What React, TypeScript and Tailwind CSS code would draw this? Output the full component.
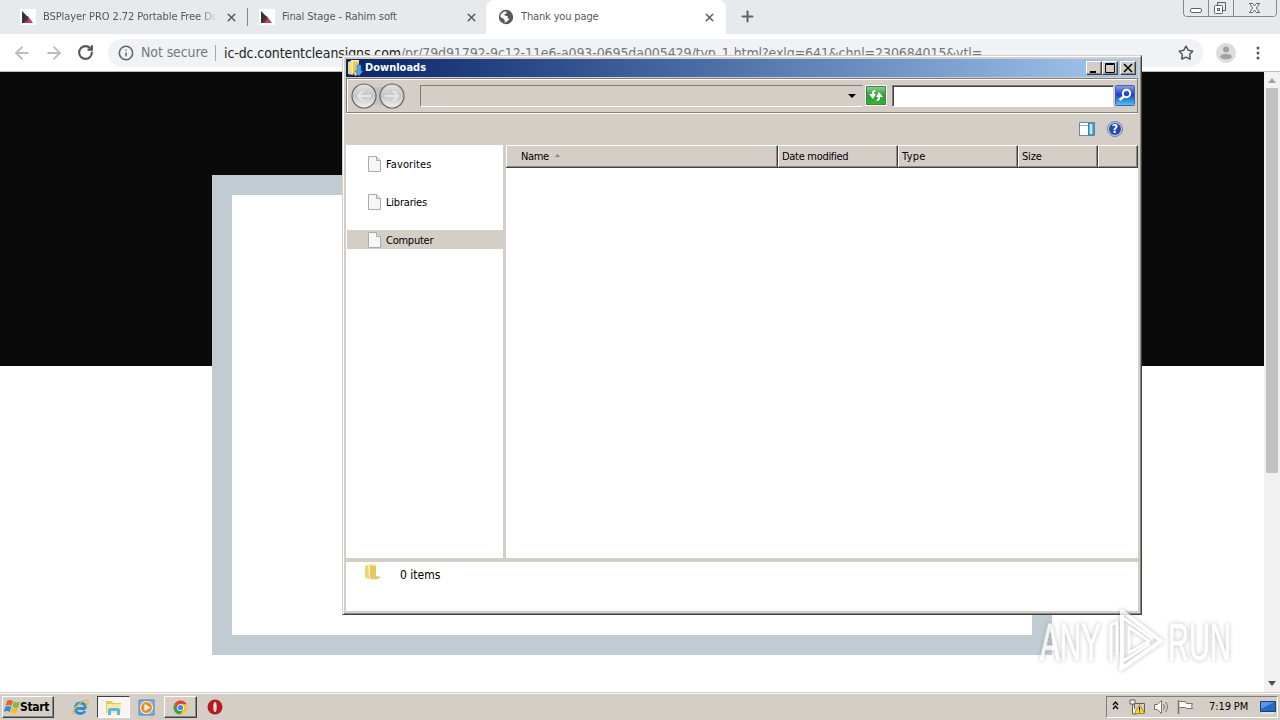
import type { ReactNode } from 'react';
import { ArrowLeft, ArrowRight, Info, Plus, RotateCw, Star, X } from 'lucide-react';

interface TabProps {
  title: string;
  className: string;
  textClass: string;
  icon: ReactNode;
  active?: boolean;
}

const sidebarItems = [
  { label: 'Favorites', text: 'tracking-[0.1px]' },
  { label: 'Libraries', text: 'tracking-[-0.2px]' },
  { label: 'Computer', text: 'tracking-[-0.25px]', selected: true },
];

const columns = [
  { label: 'Name', width: 'w-[272px] pl-[14px]', text: 'tracking-[-0.4px]', sorted: true },
  { label: 'Date modified', width: 'w-[120px] pl-[3px]', text: 'tracking-[-0.3px]' },
  { label: 'Type', width: 'w-[120px] pl-[3px]', text: 'tracking-[0.3px]' },
  { label: 'Size', width: 'w-[80px] pl-[3px]', text: 'tracking-[-0.2px]' },
  { label: '', width: 'w-[40px]', text: '' },
];

const raised = 'border border-t-white border-l-white border-r-[#404040] border-b-[#404040] shadow-[inset_-1px_-1px_0_#8c8882] bg-[#d5cec6]';

function SiteIcon() {
  return (
    <svg width="16" height="16" viewBox="0 0 16 16">
      <rect width="16" height="16" fill="#fff" />
      <path d="M2 2l6 6v6H2z" fill="#34343c" />
      <path d="M8 7l5 7H4z" fill="#b4485c" />
      <path d="M8 7v4l-4 3H3z" fill="#5d2c3a" />
    </svg>
  );
}

function GlobeIcon() {
  return (
    <svg width="16" height="16" viewBox="0 0 16 16">
      <circle cx="8" cy="8" r="7.2" fill="#55585c" />
      <path d="M8.500 2.500c-.8 1 .6 1.500-.4 2.300-1 .3-1.900.7-1.600 1.700 1 .6 2.600-.2 3.300 1 .3 1-.6 1.300-.3 2.300l2-.2c-.8 1.800-2.500 3.600-5.100 4.100.4-1.300.8-2.300-.2-3.300C5 9.300 2.500 9 2.300 7.600 2.700 4.600 5 2.500 8.500 2.500z" fill="#fff" />
    </svg>
  );
}

function Tab({ title, className, textClass, icon, active }: TabProps) {
  return (
    <div className={`relative flex h-[34px] shrink-0 items-center ${className} ${active ? 'rounded-t-lg bg-white' : ''}`}>
      {icon}
      <div className={`ml-[7px] flex-1 overflow-hidden whitespace-nowrap pt-px text-[11px] text-[#55585c] ${textClass}`}>{title}</div>
      <X size={13} strokeWidth={3} className="shrink-0 text-[#5f6368]" />
    </div>
  );
}

function BrowserButtons() {
  return (
    <svg width="94" height="17" viewBox="0 0 94 17" className="absolute left-[1183px] top-0" fill="none" stroke="#85898d">
      <path d="M.5 0v13q0 3.500 3 3.500h87q3 0 3-3.500V0M25.500 0v16M50.500 0v16" />
      <rect x="7.500" y="8.500" width="11" height="4" rx="1.500" stroke="#5d6164" fill="#fff" />
      <path d="M34.500 5.500v-3h8v8h-3" stroke="#5d6164" />
      <rect x="31.500" y="5.500" width="8" height="8" rx="1" stroke="#5d6164" fill="#fff" />
      <rect x="34.500" y="8.500" width="2" height="2" stroke="#5d6164" />
      <path d="M66.500 3.500h3l2 2.500 2-2.500h3l-3.200 4.500 3.200 4.500h-3l-2-2.500-2 2.500h-3l3.200-4.500z" stroke="#5d6164" fill="#fff" />
    </svg>
  );
}

function Browser() {
  return (
    <div className="flex h-[692px] flex-col">
      <div className="relative flex h-[34px] bg-[#e6eaed]">
        <Tab title="BSPlayer PRO 2.72 Portable Free Download" className="w-[247px] pl-[20px] pr-[9px]" textClass="mask-r-from-90% mr-[8px] tracking-[-0.08px]" icon={<SiteIcon />} />
        <div className="mt-[8px] h-[18px] w-px bg-[#85898d]" />
        <Tab title="Final Stage - Rahim soft" className="w-[238px] pl-[11px] pr-[8px]" textClass="tracking-[-0.1px]" icon={<SiteIcon />} />
        <Tab title="Thank you page" className="w-[240px] pl-[12px] pr-[10px]" textClass="tracking-[-0.15px]" icon={<GlobeIcon />} active />
        <Plus size={17} strokeWidth={2.900} className="ml-[13px] mt-[8px] text-[#5f6368]" />
        <BrowserButtons />
      </div>
      <div className="flex h-[38px] items-center border-b border-[#b9bbbd] bg-white">
        <ArrowLeft size={20} strokeWidth={2.200} className="ml-[12px] shrink-0 text-[#babcbe]" />
        <ArrowRight size={20} strokeWidth={2.200} className="ml-[12px] shrink-0 text-[#babcbe]" />
        <RotateCw size={17} strokeWidth={3} className="ml-[13px] shrink-0 text-[#55585c]" />
        <div className="ml-[14px] flex h-[28px] w-[1095px] shrink-0 items-center rounded-full bg-[#f0f3f5] pl-[10px] text-[14px] font-extralight">
          <Info size={16} strokeWidth={2.300} className="shrink-0 text-[#5f6368]" />
          <span className="ml-[7px] w-[67px] whitespace-nowrap tracking-[-0.1px] text-[#74787c]">Not secure</span>
          <span className="ml-[7px] h-[16px] w-px bg-[#a5a8ab]" />
          <span className="ml-[8px] flex-1 whitespace-nowrap pt-px tracking-[-0.095px] text-[#74787c]">
            <span className="text-[#222]">ic-dc.contentcleansigns.com</span>/pr/79d91792-9c12-11e6-a093-0695da005429/typ_1.html?exlg=641&amp;chnl=230684015&amp;ytl=
          </span>
          <Star size={16} strokeWidth={2.300} className="mr-[9px] shrink-0 text-[#55585c]" />
        </div>
        <svg width="20" height="20" viewBox="0 0 20 20" className="ml-[13px] shrink-0">
          <circle cx="10" cy="10" r="10" fill="#dcdcdc" />
          <circle cx="10" cy="6.500" r="3" fill="#a0a0a0" />
          <path d="M4 14q0-3 6-3t6 3q-2 2.500-6 2.500T4 14z" fill="#a0a0a0" />
        </svg>
        <svg width="4" height="14" viewBox="0 0 4 14" className="ml-[20px]" fill="#55585c">
          <circle cx="2" cy="2" r="1.500" />
          <circle cx="2" cy="7" r="1.500" />
          <circle cx="2" cy="12" r="1.500" />
        </svg>
      </div>
      <div className="flex h-[620px]">
        <div className="w-[1264px] bg-[linear-gradient(#0a0a0a_294px,#fff_294px)] pl-[212px] pt-[103px]">
          <div className="h-[480px] w-[840px] border-[20px] border-[#c0ccd2] bg-white" />
        </div>
        <div className="flex w-[16px] flex-col items-center bg-[#f1f1f1]">
          <svg width="16" height="16"><path d="M4 11l4-5 4 5z" fill="#a3a3a3" /></svg>
          <div className="h-[385px] w-[12px] bg-[#c1c1c1]" />
          <svg width="16" height="16" className="mt-auto"><path d="M4 5h8l-4 5z" fill="#505050" /></svg>
        </div>
      </div>
    </div>
  );
}

function PageIcon() {
  return (
    <svg width="13" height="16" viewBox="0 0 13 16">
      <path d="M.5.500h8l4 4v11H.5z" fill="#f6f6f6" stroke="#aaa" />
      <path d="M8.500.5v4h4" fill="#e2e2e2" stroke="#aaa" />
    </svg>
  );
}

function NavButtons() {
  return (
    <svg width="56" height="30" viewBox="0 0 56 30">
      <defs>
        <linearGradient id="nav" x2="0" y2="1">
          <stop stopColor="#e2e2e2" />
          <stop offset=".5" stopColor="#c6c6c6" />
          <stop offset="1" stopColor="#f2f2f2" />
        </linearGradient>
      </defs>
      <path d="M13 4q14 5 28 0v22q-14-5-28 0z" fill="#c4c0ba" />
      <circle cx="14" cy="15" r="12" fill="url(#nav)" stroke="#66676b" strokeWidth="1.200" />
      <circle cx="42" cy="15" r="12" fill="url(#nav)" stroke="#66676b" strokeWidth="1.200" />
      <path d="M21 15H8m5-5l-5 5 5 5M35 15h13m-5-5l5 5-5 5" fill="none" stroke="#e6e6e6" strokeWidth="2" />
    </svg>
  );
}

function RefreshIcon() {
  return (
    <svg width="22" height="21" viewBox="0 0 22 21">
      <defs>
        <linearGradient id="refresh" x2="0" y2="1">
          <stop stopColor="#8fd08f" />
          <stop offset=".5" stopColor="#2d9d35" />
          <stop offset="1" stopColor="#35b52c" />
        </linearGradient>
      </defs>
      <rect width="22" height="21" fill="#fff" />
      <rect x="1.500" y="1.500" width="19" height="18" fill="url(#refresh)" stroke="#43844a" />
      <path d="M11 5Q6 5 7 9H4l4 5 3-5H9q0-2 2-4zM11 16q5 0 4-4h3l-4-5-3 5h2q0 2-2 4z" fill="#fff" />
    </svg>
  );
}

function SearchIcon() {
  return (
    <svg width="20" height="21" viewBox="0 0 20 21">
      <defs>
        <linearGradient id="search" x2="0" y2="1">
          <stop stopColor="#8fa6e4" />
          <stop offset=".45" stopColor="#1c3fc4" />
          <stop offset="1" stopColor="#43d0f4" />
        </linearGradient>
      </defs>
      <rect x=".5" y=".5" width="19" height="20" rx="1" fill="url(#search)" stroke="#4b61b0" />
      <circle cx="11.500" cy="8.500" r="3.700" fill="none" stroke="#fff" strokeWidth="2" />
      <path d="M9 11.500L4.500 15" stroke="#fff" strokeWidth="2.500" />
    </svg>
  );
}

function FolderIcon({ download }: { download?: boolean }) {
  return (
    <svg width="18" height="18" viewBox="0 0 18 18">
      <path d="M1 3l5-2v15l-5-1z" fill="#eed57c" />
      <path d="M4 1h8v13H5z" fill="#fbf0b2" />
      <path d="M6 2l6 1v12l-4 2-2-3z" fill="#e8c860" />
      {download ? <path d="M10 6h4v6h2l-4 5-4-5h2z" fill="#4aa6ea" stroke="#2468b0" strokeWidth=".5" /> : <path d="M11 12l3 2 2-1v2l-5 2z" fill="#dcc67c" />}
    </svg>
  );
}

function Explorer() {
  return (
    <div className="absolute left-[342px] top-[55px] h-[560px] w-[800px] border border-[#d5cec6] border-b-[#404040] border-r-[#404040] bg-[#d5cec6] pl-[3px] pr-[2px] pt-[3px] shadow-[inset_1px_1px_0_#fff,inset_-1px_-1px_0_#8c8882]">
      <div className="mr-px flex h-[18px] items-center bg-linear-to-r from-[#0a246a] to-[#a6caf0] pl-px pr-[2px]">
        <FolderIcon download />
        <span className="flex-1 pt-px text-[11px] font-bold text-white">Downloads</span>
        <div className={`h-[14px] w-[16px] ${raised}`}>
          <svg width="14" height="12"><path d="M3 9h6v2H3z" /></svg>
        </div>
        <div className={`h-[14px] w-[16px] ${raised}`}>
          <svg width="14" height="12"><path d="M2.500 1.500h9v9h-9zM2 2.500h10" fill="none" stroke="#000" /></svg>
        </div>
        <div className={`ml-[2px] h-[14px] w-[16px] ${raised}`}>
          <svg width="14" height="12"><path d="M3 2l8 8M11 2l-8 8" stroke="#000" strokeWidth="1.600" /></svg>
        </div>
      </div>
      <div className="mr-px mt-px flex h-[35px] items-center border border-[#807c76] shadow-[inset_1px_1px_0_#fff,0_1px_0_#fff]">
        <div className="pl-[3px]"><NavButtons /></div>
        <div className="ml-[14px] flex h-[22px] w-[443px] shrink-0 items-center justify-end border border-[#807c76] border-b-white border-r-[#d5cec6] pr-[6px]">
          <svg width="8" height="4"><path d="M0 0h8L4 4z" /></svg>
        </div>
        <div className="ml-[2px] shrink-0"><RefreshIcon /></div>
        <div className="ml-[5px] h-[22px] w-[222px] shrink-0 border border-[#807c76] border-b-white border-r-[#d5cec6] bg-white shadow-[inset_1px_1px_0_#404040]" />
        <div className="ml-px shrink-0"><SearchIcon /></div>
      </div>
      <div className="flex h-[32px] items-center justify-end pr-[16px]">
        <svg width="16" height="14" viewBox="0 0 16 14">
          <path d="M.5.500h15v13H.5z" fill="#fff" stroke="#6289b0" />
          <path d="M1 3.500h9" stroke="#8db0cd" />
          <path d="M9.500 1h5.500v12H9.500z" fill="#62b8d8" stroke="#427ca5" />
          <path d="M11 2h2v10h-2z" fill="#b8eaf6" />
        </svg>
        <svg width="16" height="16" viewBox="0 0 16 16" className="ml-[12px]">
          <circle cx="8" cy="8" r="7.500" fill="#c7d0e8" stroke="#707fae" />
          <circle cx="8" cy="8" r="6" fill="#2449a8" />
          <text x="8" y="12.300" textAnchor="middle" fontSize="12" fontWeight="bold" fill="#fff">?</text>
        </svg>
      </div>
      <div className="flex h-[413px]">
        <div className="w-[157px] bg-white pl-px pt-[9px]">
          {sidebarItems.map((item) => (
            <div key={item.label} className={`mb-[19px] flex h-[19px] items-center pl-[21px] text-[11px] ${item.selected ? 'bg-[#d5cec6]' : ''}`}>
              <PageIcon />
              <span className={`ml-[5px] pt-[3px] ${item.text}`}>{item.label}</span>
            </div>
          ))}
        </div>
        <div className="ml-[3px] w-[632px] bg-white">
          <div className="flex h-[23px] border-b border-[#404040]">
            {columns.map((col, i) => (
              <div key={i} className={`flex items-center border-l border-r border-t border-l-white border-r-[#404040] border-t-white bg-[#d5cec6] text-[11px] shadow-[inset_-1px_-1px_0_#8c8882] ${col.width}`}>
                <span className={`pt-[2px] ${col.text}`}>{col.label}</span>
                {col.sorted && <svg width="5" height="3" className="ml-[6px] mb-[2px]"><path d="M0 3L2.500 0 5 3z" fill="#87837e" /></svg>}
              </div>
            ))}
          </div>
        </div>
      </div>
      <div className="mt-[4px] flex h-[49px] w-[792px] bg-white pl-[18px] pt-px">
        <FolderIcon />
        <span className="ml-[18px] mt-[4px] text-[12px] leading-[16px]">0 items</span>
      </div>
    </div>
  );
}

function Watermark() {
  return (
    <svg width="204" height="70" viewBox="0 0 204 70" className="absolute left-[1034px] top-[606px] opacity-80 drop-shadow-[0_0_2px_#7779]" fill="#fff" stroke="#fff">
      <text x="6" y="54" fontSize="51" textLength="61" lengthAdjust="spacingAndGlyphs" className="font-['Liberation_Sans']">ANY</text>
      <text x="134" y="54" fontSize="51" textLength="63" lengthAdjust="spacingAndGlyphs" className="font-['Liberation_Sans']">RUN</text>
      <g fill="none" strokeLinejoin="round">
        <path d="M88 5v50l-1 8 40-28z" strokeWidth="4" />
        <path d="M95 21v26l20-12zM77 56V19l6-3v33M88 11l31 22M86 57l30-19" strokeWidth="3" />
      </g>
    </svg>
  );
}

function Taskbar() {
  return (
    <div className="flex h-[28px] items-center border-t border-[#d5cec6] bg-[#d5cec6] pl-[2px] pr-[2px] pt-px shadow-[inset_0_1px_0_#fff]">
      <div className={`flex h-[22px] w-[52px] items-center pl-px ${raised}`}>
        <svg width="17" height="16" viewBox="0 0 17 16" className="shrink-0">
          <path d="M3 2q3-2 6 0L7.500 7q-3-2-6 0z" fill="#e96228" />
          <path d="M10 2.500q3 2 6 0L14.500 8q-3 2-6-.5z" fill="#84ba3b" />
          <path d="M1.200 8q3-2 6 0l-1.500 5q-3-2-6 0z" fill="#3b88cf" />
          <path d="M8 8.500q3 2 6 0L12.500 14q-3 2-6-.5z" fill="#f4bd27" />
        </svg>
        <span className="-ml-px text-[12px] font-bold tracking-[-0.3px]">Start</span>
      </div>
      <svg width="17" height="17" viewBox="0 0 17 17" className="ml-[18px]">
        <path d="M13.500 9.500H5M13 12q-2 3-5 2.500Q3 14 3.500 9 4 4 8.500 4q5 0 5 5.500" fill="none" stroke="#2f8fd5" strokeWidth="2.900" />
        <path d="M2 15Q-1 13 6 6t10-4q1 1-2 5" fill="none" stroke="#e5bc38" strokeWidth="1.400" />
      </svg>
      <div className="ml-[8px] flex h-[22px] w-[33px] items-center justify-center border border-b-white border-l-[#404040] border-r-white border-t-[#404040] bg-[#f7f5f2]">
        <svg width="18" height="17" viewBox="0 0 18 17">
          <path d="M1 2h6l1 2h8v10H1z" fill="#e8ca65" />
          <path d="M2 5h14v9H2z" fill="#faeaa0" />
          <path d="M3 16v-5q0-2 2-2h8q2 0 2 2v5h-3v-4H6v4z" fill="#62b3e6" />
        </svg>
      </div>
      <svg width="17" height="17" viewBox="0 0 17 17" className="ml-[8px]">
        <path d="M1 1h15v15H1z" fill="#80b6e4" stroke="#4b84b9" />
        <circle cx="8.500" cy="8.500" r="6" fill="#f18b20" stroke="#fff" />
        <path d="M6.500 5l6 3.500-6 3.500z" fill="#fff" />
      </svg>
      <div className={`ml-[9px] flex h-[22px] w-[33px] items-center justify-center ${raised}`}>
        <svg width="15" height="15" viewBox="0 0 16 16">
          <circle cx="8" cy="8" r="7.500" fill="#f3c72e" />
          <path d="M1.500 4.200A7.500 7.500 0 0 1 14.700 4.500H8L5 10z" fill="#dc4636" />
          <path d="M1.500 4.200A7.500 7.500 0 0 0 7.500 15.500L11 10H5z" fill="#3f9d50" />
          <circle cx="8" cy="8" r="3.600" fill="#fff" />
          <circle cx="8" cy="8" r="2.800" fill="#4784e8" />
        </svg>
      </div>
      <svg width="16" height="16" viewBox="0 0 16 16" className="ml-[10px]">
        <circle cx="8" cy="8" r="7.500" fill="#b51b20" />
        <ellipse cx="8" cy="8" rx="1.700" ry="5" fill="#e9dcda" />
      </svg>
      <div className="ml-auto flex h-[22px] w-[172px] items-center border border-b-white border-l-[#807c76] border-r-white border-t-[#807c76] pl-[5px]">
        <svg width="7" height="9" viewBox="0 0 7 9" className="-mt-[3px]" fill="none" stroke="#000" strokeWidth="1.300"><path d="M1 4l2.500-3L6 4M1 8l2.500-3L6 8" /></svg>
        <svg width="17" height="16" viewBox="0 0 17 16" className="ml-[10px]">
          <path d="M5.500 4.500h10v9h-10z" fill="#d3d0c8" stroke="#605e59" />
          <path d="M1 1h5v4H1zM3.500 5v10h4" fill="#fff" stroke="#5f5d59" />
          <path d="M10.500 5.500l5 9h-10z" fill="#f8dd35" stroke="#a88b18" />
          <path d="M10.500 8v3.500m0 1v1" stroke="#000" />
        </svg>
        <svg width="17" height="16" viewBox="0 0 17 16" className="ml-[7px]" fill="none" stroke="#77736e">
          <path d="M1.500 5.500h3l4-4v13l-4-4h-3z" fill="#fff" />
          <path d="M10.500 5q2 3 0 6M12.500 3q4 5 0 10" />
        </svg>
        <svg width="17" height="16" viewBox="0 0 17 16" className="ml-[7px]" stroke="#77736e">
          <path d="M2.500 2.500h6l1 2h6q-2 3 0 5h-6l-1-1h-6" fill="#fff" />
          <path d="M1.500 1v14" strokeWidth="1.500" />
        </svg>
        <span className="ml-[15px] w-[41px] whitespace-nowrap pt-px text-[11px] tracking-[-0.1px]">7:19 PM</span>
        <svg width="16" height="14" viewBox="0 0 16 14" className="ml-[10px]">
          <path d="M.5 1.500h15v10H.5z" fill="#256bc3" stroke="#1c3d78" />
          <path d="M1 2h13L1 9z" fill="#559de6" />
          <path d="M2 13h12" stroke="#f5f5f5" />
        </svg>
      </div>
    </div>
  );
}

export default function App() {
  return (
    <div className="relative h-[720px] w-[1280px] overflow-hidden bg-white font-['DejaVu_Sans_Condensed','DejaVu_Sans',sans-serif] text-black">
      <Browser />
      <Taskbar />
      <Explorer />
      <Watermark />
    </div>
  );
}
